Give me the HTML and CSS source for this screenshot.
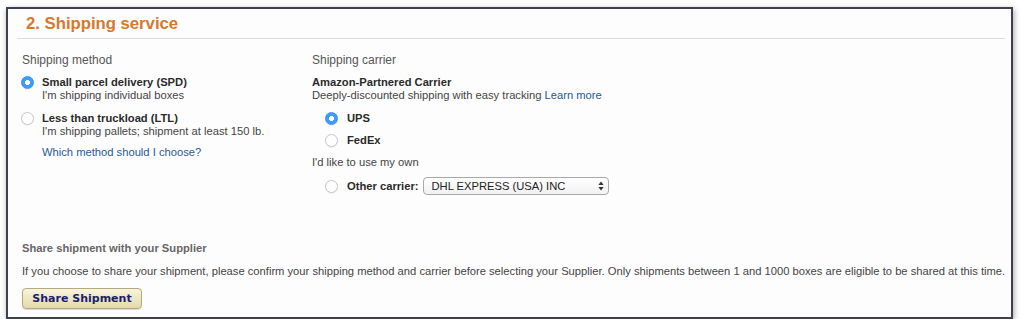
FILE: index.html
```html
<!DOCTYPE html>
<html lang="en">
<head>
    <meta charset="UTF-8">
    <meta name="viewport" content="width=device-width, initial-scale=1.0">
    <title>Shipping service</title>
    <link rel="stylesheet" href="styles.css">
</head>
<body>
    <div class="panel">
        <div class="panel-header">
            <h2>2. Shipping service</h2>
        </div>

        <div class="columns">
            <div class="col col-method">
                <div class="col-title">Shipping method</div>

                <label class="option">
                    <input type="radio" name="method" checked>
                    <span class="option-text">
                        <b>Small parcel delivery (SPD)</b>
                        <span class="sub">I'm shipping individual boxes</span>
                    </span>
                </label>

                <label class="option">
                    <input type="radio" name="method">
                    <span class="option-text">
                        <b>Less than truckload (LTL)</b>
                        <span class="sub">I'm shipping pallets; shipment at least 150 lb.</span>
                    </span>
                </label>

                <a class="help-link" href="#">Which method should I choose?</a>
            </div>

            <div class="col col-carrier">
                <div class="col-title">Shipping carrier</div>

                <div class="partner">
                    <b>Amazon-Partnered Carrier</b>
                    <span class="sub">Deeply-discounted shipping with easy tracking <a href="#">Learn more</a></span>
                </div>

                <label class="carrier-row">
                    <input type="radio" name="carrier" checked>
                    <b>UPS</b>
                </label>
                <label class="carrier-row">
                    <input type="radio" name="carrier">
                    <b>FedEx</b>
                </label>

                <div class="own-note">I'd like to use my own</div>

                <div class="carrier-row other-row">
                    <input type="radio" name="carrier" id="otherCarrier">
                    <label for="otherCarrier"><b>Other carrier:</b></label>
                    <div class="select-wrap">
                        <select id="carrierSelect">
                            <option>DHL EXPRESS (USA) INC</option>
                            <option>UNITED STATES POSTAL SERVICE (USPS)</option>
                            <option>OTHER</option>
                        </select>
                        <svg class="select-arrows" width="6" height="10" viewBox="0 0 6 10">
                            <path d="M3 0.5 L5.6 4 H0.4 Z" fill="#333"/>
                            <path d="M3 9.5 L5.6 6 H0.4 Z" fill="#333"/>
                        </svg>
                    </div>
                </div>
            </div>
        </div>

        <div class="share">
            <div class="share-title">Share shipment with your Supplier</div>
            <p class="share-text">If you choose to share your shipment, please confirm your shipping method and carrier before selecting your Supplier. Only shipments between 1 and 1000 boxes are eligible to be shared at this time.</p>
            <button type="button" class="share-btn">Share Shipment</button>
        </div>
    </div>
</body>
</html>
```

FILE: styles.css
```css
body {
    margin: 0;
    background-color: #fff;
    font-family: "Liberation Sans", Arial, sans-serif;
    font-size: 11.2px;
    color: #333;
}
.panel {
    display: flex;
    flex-direction: column;
    box-sizing: border-box;
    width: 1007px;
    height: 312px;
    margin: 7px 0 0 6px;
    border: 2px solid #3d4050;
    background: #fdfdfd;
    box-shadow: 1px 2px 6px rgba(0, 0, 0, 0.35);
}
.panel-header {
    margin: 0 6px 0 9px;
    padding-left: 9px;
    border-bottom: 1px solid #dcdcdc;
}
.panel-header h2 {
    margin: 0;
    font-size: 16.7px;
    line-height: 29px;
    color: #d9782b;
}
.columns {
    display: flex;
    padding: 14px 0 0 14px;
}
.col-method {
    width: 290px;
}
.col-title {
    font-size: 12px;
    line-height: 14px;
    color: #555;
    margin-bottom: 9px;
}
.sub {
    display: block;
    color: #444;
}
b {
    color: #2a2a2a;
}
a {
    color: #1d5a9b;
    text-decoration: none;
}
input[type="radio"] {
    appearance: none;
    flex: none;
    width: 13px;
    height: 13px;
    margin: 0;
    border: 1px solid #c6c6c6;
    border-radius: 50%;
    background: #fff;
    box-shadow: 0 1px 1px rgba(0, 0, 0, 0.06);
}
input[type="radio"]:checked {
    border-color: #3a8ff0;
    background: radial-gradient(circle, #fff 0 2.2px, #3d9bfc 2.8px);
}
.option {
    display: flex;
    gap: 8px;
    line-height: 13px;
    margin-bottom: 10px;
    margin-left: -1px;
}
.help-link {
    display: block;
    line-height: 13px;
    margin: -2px 0 0 20px;
}
.partner {
    line-height: 13px;
}
.carrier-row {
    display: flex;
    align-items: center;
    gap: 9px;
    height: 22px;
    padding-left: 13px;
}
.partner + .carrier-row {
    margin-top: 5px;
}
.own-note {
    line-height: 22px;
    color: #444;
}
.other-row {
    height: 26px;
}
.other-row label {
    margin-right: -5px;
}
.select-wrap {
    position: relative;
}
.select-wrap select {
    appearance: none;
    width: 186px;
    height: 18px;
    padding: 0 8px;
    border: 1px solid #a8a8a8;
    border-radius: 4px;
    background: linear-gradient(#ffffff, #f1f1f1);
    font-family: "Liberation Sans", Arial, sans-serif;
    font-size: 11.2px;
    color: #222;
}
.select-arrows {
    position: absolute;
    right: 5px;
    top: 4px;
}
.share {
    margin-top: auto;
    padding: 0 0 8px 14px;
}
.share-title {
    font-weight: bold;
    line-height: 13px;
    color: #666;
}
.share-text {
    margin: 10px 0;
    line-height: 13px;
    color: #444;
}
.share-btn {
    width: 120px;
    height: 21px;
    padding: 0;
    border: 1px solid #b4aa7e;
    border-radius: 4px;
    background: linear-gradient(#f8f4df, #e4daa9);
    box-shadow: 0 1px 1px rgba(0, 0, 0, 0.15);
    font-family: "DejaVu Sans", Verdana, sans-serif;
    font-size: 11px;
    font-weight: bold;
    color: #1b216e;
    cursor: pointer;
}
```
